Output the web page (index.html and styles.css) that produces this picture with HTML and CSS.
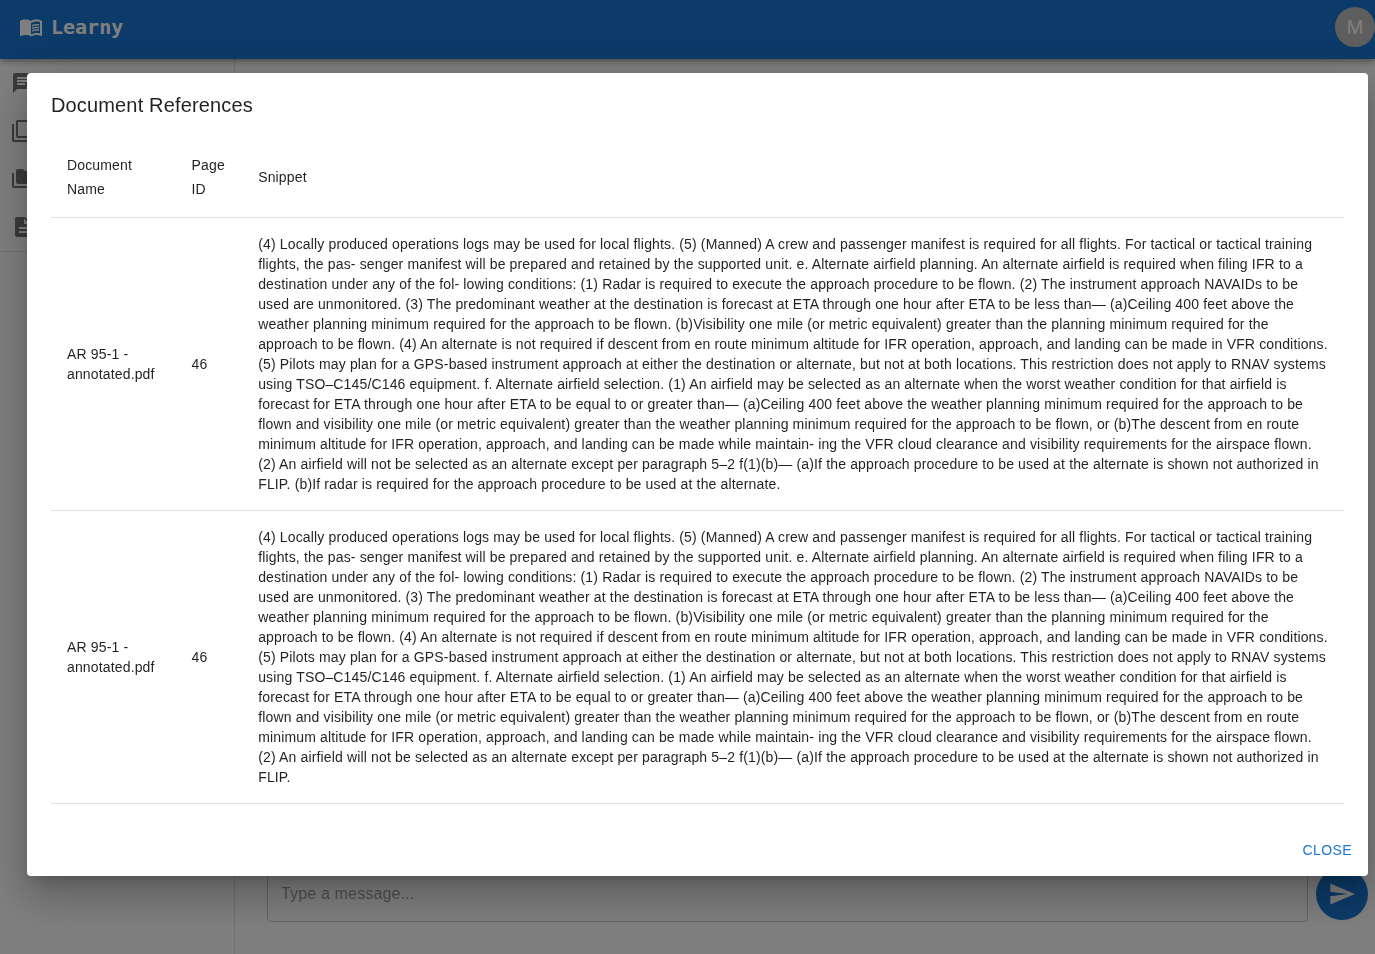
FILE: index.html
```html
<!DOCTYPE html>
<html lang="en">
<head>
<meta charset="utf-8">
<meta name="viewport" content="width=device-width, initial-scale=1">
<title>Learny</title>
<link rel="stylesheet" href="styles.css">
</head>
<body>
<div class="app">
  <header class="app-bar">
    <a class="brand" href="#">
      <svg class="icon" viewBox="0 0 24 24" aria-hidden="true"><path d="M21 5c-1.110-.350-2.330-.500-3.500-.500-1.950 0-4.050.400-5.500 1.500-1.450-1.100-3.550-1.500-5.500-1.500S2.450 4.900 1 6v14.650c0 .250.250.500.500.500.100 0 .150-.050.250-.050C3.100 20.450 5.050 20 6.500 20c1.950 0 4.050.400 5.500 1.500 1.350-.850 3.800-1.500 5.500-1.500 1.650 0 3.350.300 4.750 1.050.100.050.150.050.250.050.250 0 .500-.250.500-.500V6c-.600-.450-1.250-.750-2-1zm0 13.500c-1.100-.350-2.300-.500-3.500-.500-1.700 0-4.150.650-5.500 1.500V8c1.350-.850 3.800-1.500 5.500-1.500 1.200 0 2.400.150 3.500.500v11.500z"/><path d="M17.500 10.500c.880 0 1.730.090 2.500.260V9.240c-.790-.150-1.640-.240-2.500-.240-1.700 0-3.240.290-4.500.830v1.660c1.130-.640 2.700-.990 4.500-.990zM13 12.490v1.660c1.130-.640 2.700-.990 4.500-.990.880 0 1.730.090 2.500.260V11.900c-.790-.150-1.640-.240-2.500-.240-1.700 0-3.240.300-4.500.830zM17.500 14.330c-1.700 0-3.240.290-4.500.830v1.660c1.130-.640 2.700-.990 4.500-.990.880 0 1.730.090 2.500.260v-1.520c-.790-.160-1.640-.240-2.500-.240z"/></svg>
      <span>Learny</span>
    </a>
    <button class="avatar" type="button" aria-label="Account">M</button>
  </header>
  <div class="workspace">
    <nav class="sidebar" aria-label="Main">
      <ul class="nav-list">
        <li><a class="nav-item" href="#" aria-label="Chat"><svg class="icon" viewBox="0 0 24 24"><path d="M20 2H4c-1.100 0-1.990.900-1.990 2L2 22l4-4h14c1.100 0 2-.900 2-2V4c0-1.100-.900-2-2-2zM6 9h12v2H6V9zm8 5H6v-2h8v2zm4-6H6V6h12v2z"/></svg></a></li>
        <li><a class="nav-item" href="#" aria-label="Collections"><svg class="icon" viewBox="0 0 24 24"><path d="M3 5H1v16c0 1.100.900 2 2 2h16v-2H3V5zm18-4H7c-1.100 0-2 .900-2 2v14c0 1.100.900 2 2 2h14c1.100 0 2-.900 2-2V3c0-1.100-.900-2-2-2zm0 16H7V3h14v14z"/></svg></a></li>
        <li><a class="nav-item" href="#" aria-label="Folders"><svg class="icon" viewBox="0 0 24 24"><path d="M3 6H1v13c0 1.100.900 2 2 2h17v-2H3V6z"/><path d="M21 4h-7l-2-2H7c-1.100 0-1.990.900-1.990 2L5 15c0 1.100.900 2 2 2h14c1.100 0 2-.900 2-2V6c0-1.100-.900-2-2-2z"/></svg></a></li>
        <li><a class="nav-item" href="#" aria-label="Documents"><svg class="icon" viewBox="0 0 24 24"><path d="M14 2H6c-1.100 0-1.990.900-1.990 2L4 20c0 1.100.890 2 1.990 2H18c1.100 0 2-.900 2-2V8l-6-6zm2 16H8v-2h8v2zm0-4H8v-2h8v2zm-3-5V3.500L18.500 9H13z"/></svg></a></li>
      </ul>
    </nav>
    <main class="chat">
      <form class="composer">
        <input class="message" type="text" placeholder="Type a message..." aria-label="Message">
        <button class="send" type="button" aria-label="Send"><svg class="send-icon" viewBox="0 0 24 24"><path d="M2.010 21 23 12 2.010 3 2 10l15 2-15 2z"/></svg></button>
      </form>
    </main>
  </div>
</div>

<div class="backdrop">
  <section class="dialog" role="dialog" aria-modal="true" aria-labelledby="dialog-title">
    <h2 class="dialog-title" id="dialog-title">Document References</h2>
    <div class="dialog-content">
      <table class="references">
        <thead>
          <tr><th scope="col">Document Name</th><th scope="col">Page ID</th><th scope="col">Snippet</th></tr>
        </thead>
        <tbody>
          <tr>
            <td>AR 95-1 - annotated.pdf</td>
            <td>46</td>
            <td>(4) Locally produced operations logs may be used for local flights. (5) (Manned) A crew and passenger manifest is required for all flights. For tactical or tactical training flights, the pas- senger manifest will be prepared and retained by the supported unit. e. Alternate airfield planning. An alternate airfield is required when filing IFR to a destination under any of the fol- lowing conditions: (1) Radar is required to execute the approach procedure to be flown. (2) The instrument approach NAVAIDs to be used are unmonitored. (3) The predominant weather at the destination is forecast at ETA through one hour after ETA to be less than— (a)Ceiling 400 feet above the weather planning minimum required for the approach to be flown. (b)Visibility one mile (or metric equivalent) greater than the planning minimum required for the approach to be flown. (4) An alternate is not required if descent from en route minimum altitude for IFR operation, approach, and landing can be made in VFR conditions. (5) Pilots may plan for a GPS-based instrument approach at either the destination or alternate, but not at both locations. This restriction does not apply to RNAV systems using TSO–C145/C146 equipment. f. Alternate airfield selection. (1) An airfield may be selected as an alternate when the worst weather condition for that airfield is forecast for ETA through one hour after ETA to be equal to or greater than— (a)Ceiling 400 feet above the weather planning minimum required for the approach to be flown and visibility one mile (or metric equivalent) greater than the weather planning minimum required for the approach to be flown, or (b)The descent from en route minimum altitude for IFR operation, approach, and landing can be made while maintain- ing the VFR cloud clearance and visibility requirements for the airspace flown. (2) An airfield will not be selected as an alternate except per paragraph 5–2 f(1)(b)— (a)If the approach procedure to be used at the alternate is shown not authorized in FLIP. (b)If radar is required for the approach procedure to be used at the alternate.</td>
          </tr>
          <tr>
            <td>AR 95-1 - annotated.pdf</td>
            <td>46</td>
            <td>(4) Locally produced operations logs may be used for local flights. (5) (Manned) A crew and passenger manifest is required for all flights. For tactical or tactical training flights, the pas- senger manifest will be prepared and retained by the supported unit. e. Alternate airfield planning. An alternate airfield is required when filing IFR to a destination under any of the fol- lowing conditions: (1) Radar is required to execute the approach procedure to be flown. (2) The instrument approach NAVAIDs to be used are unmonitored. (3) The predominant weather at the destination is forecast at ETA through one hour after ETA to be less than— (a)Ceiling 400 feet above the weather planning minimum required for the approach to be flown. (b)Visibility one mile (or metric equivalent) greater than the planning minimum required for the approach to be flown. (4) An alternate is not required if descent from en route minimum altitude for IFR operation, approach, and landing can be made in VFR conditions. (5) Pilots may plan for a GPS-based instrument approach at either the destination or alternate, but not at both locations. This restriction does not apply to RNAV systems using TSO–C145/C146 equipment. f. Alternate airfield selection. (1) An airfield may be selected as an alternate when the worst weather condition for that airfield is forecast for ETA through one hour after ETA to be equal to or greater than— (a)Ceiling 400 feet above the weather planning minimum required for the approach to be flown and visibility one mile (or metric equivalent) greater than the weather planning minimum required for the approach to be flown, or (b)The descent from en route minimum altitude for IFR operation, approach, and landing can be made while maintain- ing the VFR cloud clearance and visibility requirements for the airspace flown. (2) An airfield will not be selected as an alternate except per paragraph 5–2 f(1)(b)— (a)If the approach procedure to be used at the alternate is shown not authorized in FLIP.</td>
          </tr>
        </tbody>
      </table>
    </div>
    <div class="dialog-actions"><button class="close" type="button">CLOSE</button></div>
  </section>
</div>
</body>
</html>
```
FILE: styles.css
```css
* {
  box-sizing: border-box;
}

body {
  margin: 0;
  overflow: hidden;
  color: rgba(0, 0, 0, 0.87);
  background: #fff;
  font-family: "Liberation Sans", Arial, sans-serif;
  font-size: 16px;
  line-height: 24px;
}

button,
input {
  font-family: inherit;
}

.app {
  display: flex;
  flex-direction: column;
  height: 100vh;
}

.app-bar {
  z-index: 1;
  display: flex;
  align-items: center;
  justify-content: space-between;
  padding: 7px 0 12px 19px;
  color: #fff;
  background: #1976d2;
  box-shadow: 0 2px 4px -1px rgba(0, 0, 0, 0.2), 0 4px 5px rgba(0, 0, 0, 0.14), 0 1px 10px rgba(0, 0, 0, 0.12);
}

.brand {
  display: flex;
  align-items: center;
  gap: 8px;
  color: inherit;
  font: bold 20px/24px "DejaVu Sans Mono", monospace;
  text-decoration: none;
}

.icon {
  width: 24px;
  height: 24px;
  fill: currentColor;
}

.avatar {
  width: 40px;
  height: 40px;
  padding: 0;
  border: 0;
  border-radius: 50%;
  color: #fff;
  background: #bdbdbd;
  font-size: 20px;
  line-height: 20px;
}

.workspace {
  display: flex;
  flex: 1;
}

.sidebar {
  width: 235px;
  border-right: 1px solid rgba(0, 0, 0, 0.12);
}

.nav-list {
  margin: 0;
  padding: 0;
  border-bottom: 1px solid rgba(0, 0, 0, 0.12);
  list-style: none;
}

.nav-item {
  display: flex;
  padding: 12px 11px;
  color: rgba(0, 0, 0, 0.54);
}

.chat {
  display: flex;
  flex: 1;
  flex-direction: column;
  justify-content: flex-end;
  padding: 0 7px 32px 32px;
}

.composer {
  display: flex;
  align-items: center;
  gap: 8px;
}

.message {
  flex: 1;
  height: 56px;
  padding: 0 13px;
  border: 1px solid rgba(0, 0, 0, 0.23);
  border-radius: 4px;
  background: transparent;
  font-size: 16px;
  letter-spacing: 0.01em;
}

.message::placeholder {
  color: rgba(0, 0, 0, 0.42);
}

.send {
  display: grid;
  place-items: center;
  width: 52px;
  height: 52px;
  padding: 0;
  border: 0;
  border-radius: 50%;
  color: #fff;
  background: #1976d2;
}

.send-icon {
  width: 28px;
  height: 28px;
  fill: currentColor;
}

.backdrop {
  position: fixed;
  inset: 0;
  z-index: 10;
  display: flex;
  align-items: center;
  padding: 0 7px 5px 27px;
  background: rgba(0, 0, 0, 0.5);
}

.dialog {
  flex: 1;
  border-radius: 4px;
  background: #fff;
  box-shadow: 0 11px 15px -7px rgba(0, 0, 0, 0.2), 0 24px 38px 3px rgba(0, 0, 0, 0.14), 0 9px 46px 8px rgba(0, 0, 0, 0.12);
}

.dialog-title {
  margin: 0;
  padding: 16px 24px;
  font-size: 20px;
  font-weight: 500;
  line-height: 32px;
  letter-spacing: 0.0075em;
}

.dialog-content {
  padding: 0 24px 20px;
}

.references {
  width: 100%;
  border-collapse: collapse;
  font-size: 14px;
  line-height: 20px;
  letter-spacing: 0.01071em;
}

.references th,
.references td {
  padding: 16px;
  border-bottom: 1px solid #e0e0e0;
  text-align: left;
}

.references th {
  font-weight: 500;
  line-height: 24px;
}

.dialog-actions {
  display: flex;
  justify-content: flex-end;
  padding: 8px;
}

.close {
  padding: 6px 8px;
  border: 0;
  border-radius: 4px;
  color: #1976d2;
  background: transparent;
  font-size: 14px;
  font-weight: 500;
  line-height: 24px;
  letter-spacing: 0.02857em;
}
```
